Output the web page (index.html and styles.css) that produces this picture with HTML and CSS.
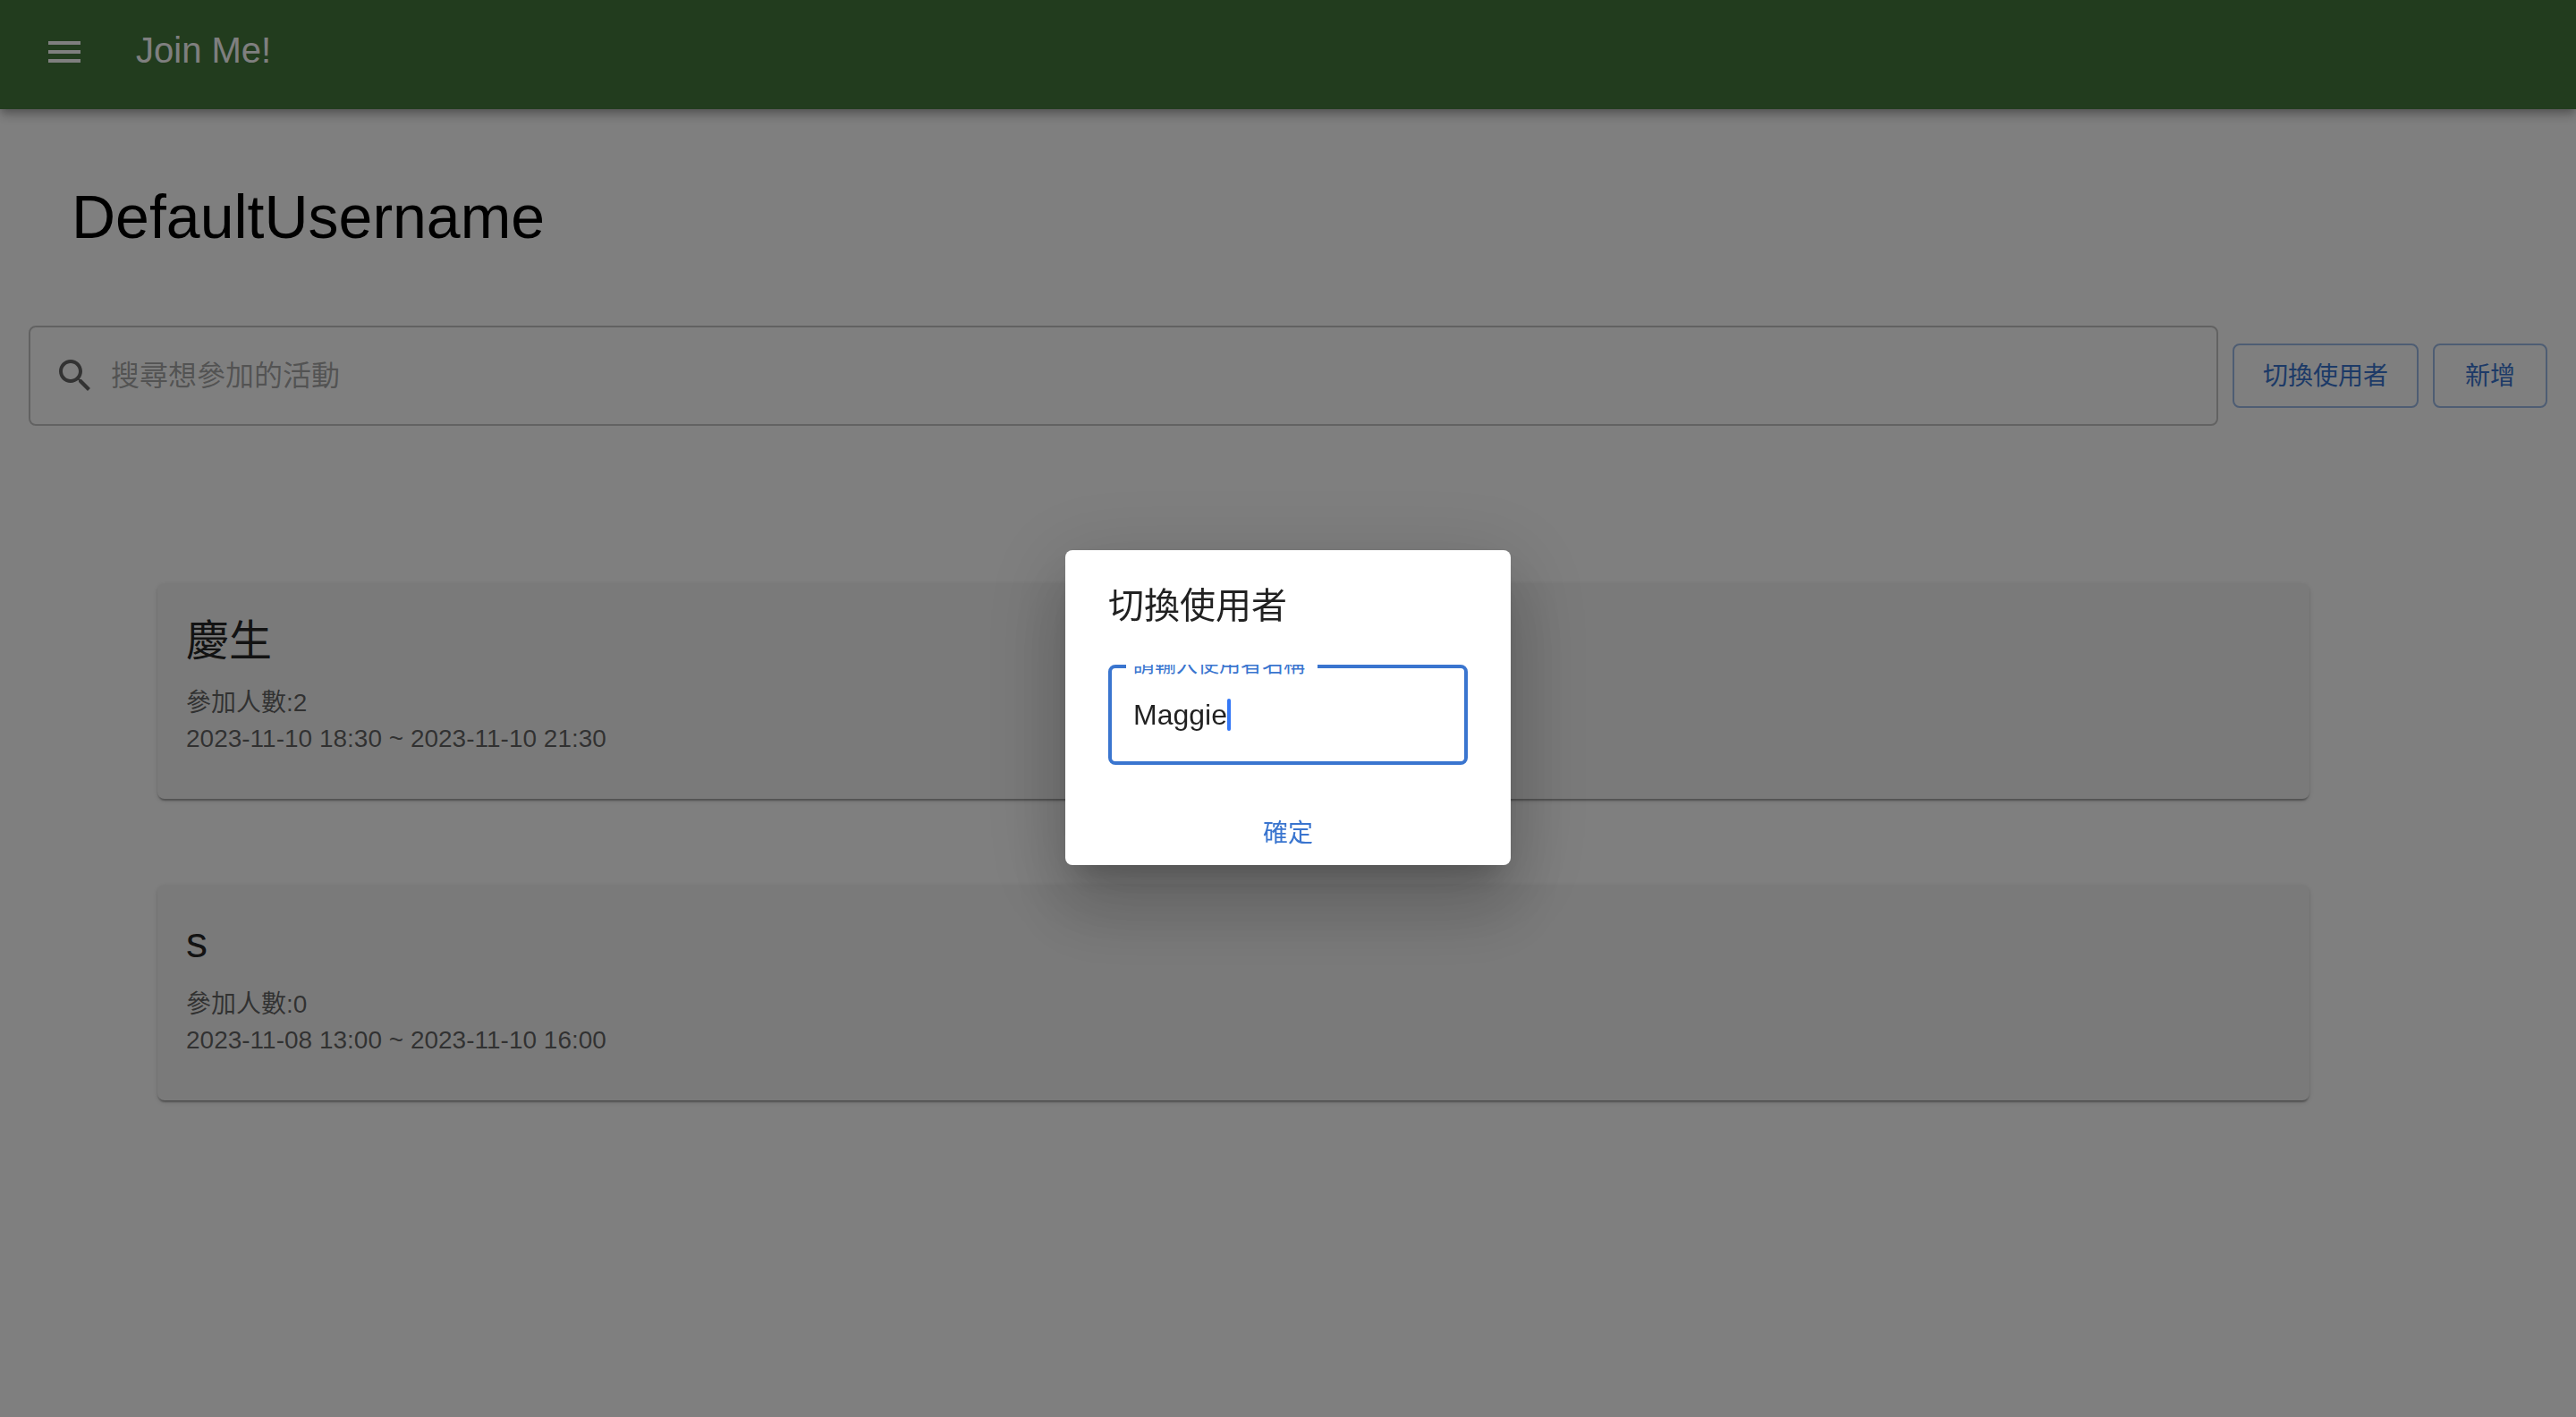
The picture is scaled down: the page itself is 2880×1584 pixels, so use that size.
FILE: index.html
```html
<!DOCTYPE html>
<html lang="zh-Hant">
<head>
  <meta charset="utf-8">
  <meta name="viewport" content="width=device-width, initial-scale=1">
  <title>Join Me!</title>
  <link rel="stylesheet" href="styles.css">
</head>
<body>
  <header class="app-bar">
    <button class="icon-button" type="button" aria-label="menu">
      <svg class="icon" viewBox="0 0 24 24" aria-hidden="true"><path d="M3 18h18v-2H3v2zm0-5h18v-2H3v2zm0-7v2h18V6H3z"/></svg>
    </button>
    <div class="app-title">Join Me!</div>
  </header>

  <main>
    <h1 class="username">DefaultUsername</h1>

    <div class="toolbar">
      <label class="search">
        <svg class="icon" viewBox="0 0 24 24" aria-hidden="true"><path d="M15.5 14h-.79l-.28-.27C15.41 12.59 16 11.11 16 9.5 16 5.91 13.09 3 9.5 3S3 5.91 3 9.5 5.91 16 9.5 16c1.61 0 3.09-.59 4.23-1.57l.27.28v.79l5 4.99L20.49 19l-4.99-5zm-6 0C7.01 14 5 11.99 5 9.5S7.01 5 9.5 5 14 7.01 14 9.5 11.99 14 9.5 14z"/></svg>
        <input class="search-input" type="text" placeholder="搜尋想參加的活動" aria-label="搜尋想參加的活動">
      </label>
      <button class="button outlined" type="button">切換使用者</button>
      <button class="button outlined" type="button">新增</button>
    </div>

    <div class="events">
      <article class="card">
        <h2 class="card-title">慶生</h2>
        <p class="card-text">參加人數:2</p>
        <p class="card-text">2023-11-10 18:30 ~ 2023-11-10 21:30</p>
      </article>
      <article class="card">
        <h2 class="card-title">s</h2>
        <p class="card-text">參加人數:0</p>
        <p class="card-text">2023-11-08 13:00 ~ 2023-11-10 16:00</p>
      </article>
    </div>
  </main>

  <div class="backdrop">
    <div class="dialog" role="dialog" aria-modal="true" aria-labelledby="dialog-title">
      <h2 class="dialog-title" id="dialog-title">切換使用者</h2>
      <div class="dialog-content">
        <div class="field">
          <label class="field-label" for="name">請輸入使用者名稱</label>
          <input class="field-input" id="name" type="text" value="Maggie">
          <span class="caret"></span>
        </div>
      </div>
      <button class="button" type="button">確定</button>
    </div>
  </div>
</body>
</html>
```
FILE: styles.css
```css
:root {
  --primary: #3a75cf;
  --text: rgba(0, 0, 0, 0.87);
  --text-secondary: rgba(0, 0, 0, 0.6);
}

* {
  box-sizing: border-box;
}

body {
  margin: 0;
  background: #fff;
  color: #000;
  font-family: "Liberation Sans", "Noto Sans CJK TC", sans-serif;
}

h1, h2, p {
  margin: 0;
  font-weight: 400;
}

button, input {
  font: inherit;
  border: 0;
  padding: 0;
  background: none;
}

.icon {
  display: block;
  flex: none;
  width: 48px;
  height: 48px;
  fill: currentColor;
}

.app-bar {
  display: flex;
  align-items: center;
  gap: 32px;
  padding: 10px 24px 16px;
  background: #44783c;
  color: #fff;
  box-shadow: 0 4px 8px -2px rgba(0, 0, 0, 0.2), 0 8px 10px 0 rgba(0, 0, 0, 0.14), 0 2px 20px 0 rgba(0, 0, 0, 0.12);
}

.icon-button {
  padding: 24px;
  color: inherit;
}

.app-title {
  padding-bottom: 4px;
  font-size: 40px;
  line-height: 64px;
}

.username {
  padding: 78px 80px 80px;
  font-size: 68px;
  line-height: 84px;
}

.toolbar {
  display: flex;
  align-items: center;
  gap: 16px;
  padding: 0 32px;
}

.search {
  display: flex;
  flex: 1;
  align-items: center;
  gap: 16px;
  height: 112px;
  padding: 0 26px;
  border: 2px solid rgba(0, 0, 0, 0.23);
  border-radius: 8px;
  color: var(--text-secondary);
}

.search-input {
  flex: 1;
  min-width: 0;
  height: 48px;
  font-size: 32px;
  color: var(--text);
  outline: none;
}

.search-input::placeholder {
  color: rgba(0, 0, 0, 0.36);
  opacity: 1;
}

.button {
  min-width: 128px;
  height: 72px;
  padding: 2px 32px 0;
  border-radius: 8px;
  color: var(--primary);
  font-size: 28px;
  line-height: 48px;
}

.outlined {
  border: 2px solid rgba(58, 117, 207, 0.5);
}

.events {
  display: grid;
  gap: 96px;
  padding: 176px 298px 96px 176px;
}

.card {
  padding: 33px 32px 47px;
  border-radius: 8px;
  background: #f5f5f5;
  box-shadow: 0 4px 2px -2px rgba(0, 0, 0, 0.2), 0 2px 2px 0 rgba(0, 0, 0, 0.14), 0 2px 6px 0 rgba(0, 0, 0, 0.12);
}

.card-title {
  margin-bottom: 17px;
  color: var(--text);
  font-size: 48px;
  line-height: 64px;
}

.card-text {
  color: var(--text-secondary);
  font-size: 28px;
  line-height: 40px;
}

.backdrop {
  position: fixed;
  inset: 0;
  display: flex;
  align-items: center;
  justify-content: center;
  padding-bottom: 2px;
  background: rgba(0, 0, 0, 0.5);
}

.dialog {
  display: flex;
  flex-direction: column;
  width: 498px;
  border-radius: 8px;
  background: #fff;
  box-shadow: 0 22px 30px -14px rgba(0, 0, 0, 0.2), 0 48px 76px 6px rgba(0, 0, 0, 0.14), 0 18px 92px 16px rgba(0, 0, 0, 0.12);
}

.dialog-title {
  padding: 30px 48px 34px;
  color: var(--text);
  font-size: 40px;
  line-height: 64px;
}

/* The content area clips the upper half of the floating label. */
.dialog-content {
  padding: 0 48px 40px;
  overflow: hidden;
}

.field {
  position: relative;
  display: flex;
  align-items: center;
  height: 112px;
  padding: 0 24px;
  border: 4px solid var(--primary);
  border-radius: 8px;
}

.field-label {
  position: absolute;
  top: -20px;
  left: 16px;
  padding: 0 14px 0 8px;
  background: #fff;
  color: var(--primary);
  font-size: 24px;
  line-height: 32px;
  white-space: nowrap;
}

.field-input {
  field-sizing: content;
  min-width: 4px;
  max-width: 100%;
  height: 48px;
  color: var(--text);
  font-size: 32px;
  outline: none;
}

.caret {
  width: 4px;
  height: 36px;
  border-radius: 2px;
  background: #3478f6;
}
```
